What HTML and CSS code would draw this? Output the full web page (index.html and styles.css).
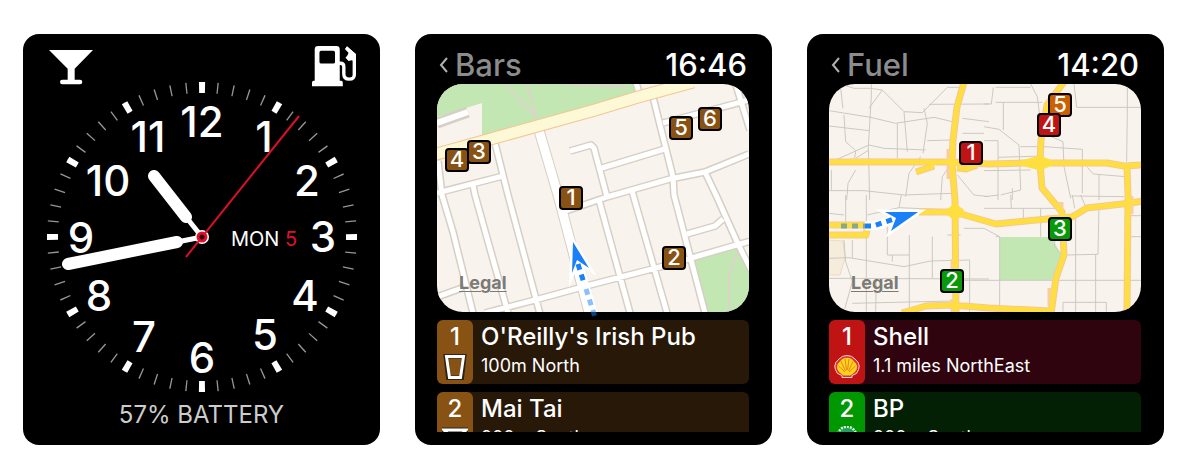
FILE: index.html
```html
<!DOCTYPE html>
<html lang="en">
<head>
<meta charset="utf-8">
<meta name="viewport" content="width=device-width, initial-scale=1">
<title>Watch places</title>
<link rel="stylesheet" href="styles.css">
</head>
<body>
<main class="watches">
  <section class="watch face" aria-label="Watch face">
    <div class="complications">
      <button class="complication" aria-label="Bars">
        <svg class="icon-glass" viewBox="0 0 132 104"><path d="M0 0H132L77 56V89H93a7 7 0 0 1 0 14H40a7 7 0 0 1 0-14H56V56Z"/></svg>
      </button>
      <button class="complication" aria-label="Fuel">
        <svg class="icon-pump" viewBox="0 0 130 120">
          <path fill-rule="evenodd" d="M18 0H72a10 10 0 0 1 10 10V103H86a5 5 0 0 1 5 5V119H0V108a5 5 0 0 1 5-5H8V10A10 10 0 0 1 18 0ZM27 14a5 5 0 0 0-5 5V47a5 5 0 0 0 5 5H63a5 5 0 0 0 5-5V19a5 5 0 0 0-5-5Z"/>
          <path class="hose" d="M80 51h4q10 0 10 10V82q0 16 16 16t15-16V28L101 5"/>
          <path d="M98 9 103 1 130 24V48L118 42 108 44 99 35 105 27 108 20Z"/>
        </svg>
      </button>
    </div>
    <svg class="dial" viewBox="0 0 312 312">
      <circle class="tick minor" cx="156" cy="156" r="149.5" pathLength="60" stroke-dasharray=".085 .915" stroke-dashoffset=".042"/>
      <circle class="tick major" cx="156" cy="156" r="149.5" pathLength="12" stroke-dasharray=".077 .923" stroke-dashoffset=".038"/>
      <g class="hours">
        <text x="156" y="56">12</text><text x="218" y="71">1</text><text x="261" y="115">2</text>
        <text x="277" y="171">3</text><text x="259" y="230">4</text><text x="219" y="269">5</text>
        <text x="156" y="292">6</text><text x="98" y="271">7</text><text x="53" y="230">8</text>
        <text x="35" y="172">9</text><text x="62" y="115">10</text><text x="102" y="71">11</text>
      </g>
      <text class="date" x="185" y="165">MON <tspan class="day">5</tspan></text>
      <g class="hand">
        <path class="stem" d="M156 156 140 136M156 156 131 161"/>
        <path class="bar" d="M108 95 140 136M22 183 131 161"/>
        <circle class="hub" cx="156" cy="156" r="7"/>
      </g>
      <path class="second" d="M140 176 253 35"/>
      <circle class="pin-hub" cx="156" cy="156" r="4"/>
    </svg>
    <p class="battery">57% BATTERY</p>
  </section>

  <section class="watch places" aria-label="Bars">
    <header class="bar-top">
      <button class="back"><svg class="chevron" viewBox="0 0 12 16"><path d="M10 1 4 8 10 15"/></svg>Bars</button>
      <time class="time">16:46</time>
    </header>
    <div class="map">
      <svg class="map-art" viewBox="0 0 312 228">
        <defs>
          <clipPath id="map-shape"><rect width="312" height="228" rx="26"/></clipPath>
          <g id="streets">
            <path d="M58 59 71 111 103 230M1 77 5 111 16 148 36 229M0 109 66 92M36 101 38 111 71 229M133 67 154 61 157 64 170 113M126 128 170 113 233 95 268 88 312 70M165 84 231 64M199-2 202 9M216 13 236 93 237 111 268 229M226 39 312 16M298-2 313 46M268 88 279 111 301 160 314 186M195 107 230 229M162 116 193 229M0 213 25 204M48 229 98 216 153 201 223 183 303 160 314 157M250 150 278 142 286 135"/>
          </g>
        </defs>
        <g clip-path="url(#map-shape)">
          <rect class="land" width="312" height="228"/>
          <path class="park" d="M0 0V33L45 19V53L203 10 196 0Z"/>
          <path class="park" d="M256 176 301 164 314 186V228H271Z"/>
          <path class="trail" d="M68 0 99 33M90 0 100 38M301 166 292 191V228M130 0 190 3"/>
          <use href="#streets" class="street-edge"/>
          <path class="street-edge wide" d="M101 43 121 111 153 232M0 39 31 28"/>
          <use href="#streets" class="street"/>
          <path class="street wide" d="M101 43 121 111 153 232"/>
          <path class="street lane" d="M0 39 31 28"/>
          <path class="avenue-edge" d="M-4 71 158 26 201 13 256-2"/>
          <path class="avenue" d="M-4 71 158 26 201 13 256-2"/>
          <path class="route-edge" d="M141 180 158 235"/>
        </g>
        <path class="arrow-edge" d="M136 158 135 189 140 176 152 184Z"/>
        <path class="arrow" d="M136 158 135 189 140 176 152 184Z"/>
        <path class="route near" d="M141 180 147 199"/>
        <path class="route far" d="M149 205 158 233"/>
        <g class="pins brown">
          <rect x="9" y="65" width="22" height="22" rx="3"/><text x="20" y="83">4</text>
          <rect x="31" y="57" width="22" height="22" rx="3"/><text x="42" y="75">3</text>
          <rect x="123" y="103" width="22" height="22" rx="3"/><text x="134" y="121">1</text>
          <rect x="233" y="33" width="22" height="22" rx="3"/><text x="244" y="51">5</text>
          <rect x="262" y="24" width="22" height="22" rx="3"/><text x="273" y="42">6</text>
          <rect x="226" y="163" width="22" height="22" rx="3"/><text x="237" y="181">2</text>
        </g>
      </svg>
      <a class="legal" href="#legal">Legal</a>
    </div>
    <ul class="list">
      <li><button class="row row-brown">
        <span class="badge">1<svg class="badge-icon" viewBox="0 0 26 26"><path class="tumbler-edge" d="M4 2H22L19.500 24H6.500Z"/><path class="tumbler" d="M4.500 2.500H21.500L18.500 23.500H7.500Z"/></svg></span>
        <span class="info"><span class="name">O'Reilly's Irish Pub</span><span class="where">100m North</span></span>
      </button></li>
      <li><button class="row row-brown">
        <span class="badge">2<svg class="badge-icon" viewBox="0 0 26 26"><path class="tumbler-edge" d="M2 4H24L13 15Z"/><path class="tumbler" d="M2 4H24L13 15Z"/></svg></span>
        <span class="info"><span class="name">Mai Tai</span><span class="where">200m South</span></span>
      </button></li>
    </ul>
  </section>

  <section class="watch places" aria-label="Fuel">
    <header class="bar-top">
      <button class="back"><svg class="chevron" viewBox="0 0 12 16"><path d="M10 1 4 8 10 15"/></svg>Fuel</button>
      <time class="time">14:20</time>
    </header>
    <div class="map">
      <svg class="map-art" viewBox="0 0 312 228">
        <defs>
          <g id="highways">
            <path d="M-2 78H123L160 80 195 79H278L295 82 314 81M135-2 128 23 124 56 123 79 126 116 127 230M235-2 218 21 212 56 211 79 213 104 233 128 235 171 227 194 222 230M298 83 299 111 298 230M90 128H125L160 138 167 140 218 135 243 133 258 124 302 119 314 117M-2 141H38M-2 151H37L38 146M73 229 97 222 123 221 160 224 222 227"/>
          </g>
        </defs>
        <g clip-path="url(#map-shape)">
          <rect class="land" width="312" height="228"/>
          <path class="block" d="M0 156 14 157 16 174 11 191H0Z"/>
          <path class="park" d="M171 153H222L232 170 223 196H171Z"/>
          <g class="lanes">
            <path transform="translate(-5 -4) scale(.3333)" d="M50 25 57 85M142 12V50L133 200 137 360M175 30 135 85M50 12 90 25H138L175 30 240 95 295 98 370 22H405M15 92 140 112 215 130 330 112 385 125M60 105 65 185 95 212 92 235M15 138 135 152M35 240 135 195 180 205 305 210M220 130V235M240 95 250 215M300 85 310 130 297 220M310 182 385 180M315 73 495 72M95 235 135 210M95 270 72 310 68 360M15 332H120L240 345 385 340M22 270V330M375 260 355 290 350 360M290 230 255 280 245 350M415 115 495 125M415 160H480M400 285 450 345 495 350"/>
            <path transform="translate(155 -4) scale(.3333)" d="M35 22H140M28 22 22 72H0M35 67H175M58 67V150M0 140 45 148 105 195 110 330 50 345M0 182H42V360M140 12 160 50 175 170M270 12 278 82H471M430 12V100L428 245M110 200H165M190 165 237 185 240 260 260 355M180 200 295 208V340M180 228 42 232M0 272 140 270M310 262 328 282 425 290M345 282V360M262 348 420 350M85 325V360"/>
            <path transform="translate(-5 111) scale(.3333)" d="M65 0V90M127 0V350M232 0 225 38 130 60M15 55 60 60M225 38 385 45M190 75V180H256M256 120V350M325 125V250M15 190 75 188 240 215 320 198 437 195V350M15 250 495 252M85 135V190M60 135 65 200 85 260 60 350M157 252 155 350M85 325 385 318M205 180V200M370 120H410"/>
            <path transform="translate(155 111) scale(.3333)" d="M0 40H225M118 40V80M170 40V125M35 125H47M-60 256H471M47 256V335M275 70V350M345 30 342 178 250 180M335 178V350M237 350V322H367V350M265 0 272 40M290 0 305 35M440 62H471M440 125H471M80 0 82 40M0 5 45 0M-60 100 0 100 47 125V256M212 125V155L232 178"/>
          </g>
          <g class="highway-edge">
            <use href="#highways"/>
            <path d="M87 88 105 82M128 84 137 85 148 81"/>
          </g>
          <g class="ramps">
            <path d="M20 77H58M120 65V95M118 127H134M124 215V228M232 118V130M302 112V130M124 175V190M221 204V222"/>
          </g>
          <g class="highway">
            <use href="#highways"/>
            <path d="M87 88 105 82M128 84 137 85 148 81M119 128 126 122 133 128 126 134ZM193 79 211 74 223 79 211 84ZM120 79H128"/>
          </g>
          <path class="route-edge" d="M36 142 50 141 68 134"/>
        </g>
        <path class="arrow-edge" d="M89 128 56 128 67 134 62 147Z"/>
        <path class="arrow" d="M89 128 56 128 67 134 62 147Z"/>
        <path class="route faded" d="M12 142H36"/>
        <path class="route near" d="M36 142H44L68 134"/>
        <g class="pins red">
          <rect class="orange" x="220" y="10" width="22" height="22" rx="3"/><text x="231" y="28">5</text>
          <rect x="209" y="30" width="22" height="22" rx="3"/><text x="220" y="48">4</text>
          <rect x="131" y="58" width="22" height="22" rx="3"/><text x="142" y="76">1</text>
          <rect class="green" x="112" y="186" width="22" height="22" rx="3"/><text x="123" y="204">2</text>
          <rect class="green" x="220" y="134" width="22" height="22" rx="3"/><text x="231" y="152">3</text>
        </g>
      </svg>
      <a class="legal" href="#legal">Legal</a>
    </div>
    <ul class="list">
      <li><button class="row row-red">
        <span class="badge">1<svg class="badge-icon" viewBox="0 0 26 26"><path class="shell-edge" d="M8 23.500V21.500L3.500 19.500Q.5 15 .8 12 1 8 5 5 8 1.500 13 1.500T21 5Q25 8 25.200 12 25.500 15 22.500 19.500L18 21.500V23.500Z"/><path class="shell-body" d="M9.500 21.500 5 18Q2.500 15 3 12 3.500 9 6 7.500 8 4 13 3.800 18 4 20 7.500 22.500 9 23 12 23.500 15 21 18L16.500 21.500Z"/><path class="shell-rays" d="M11 18 4.500 12M11.500 17 7 7.500M12.500 16 11 5M13.500 16 15 5M14.500 17 19 7.500M15 18 21.500 12"/></svg></span>
        <span class="info"><span class="name">Shell</span><span class="where">1.1 miles NorthEast</span></span>
      </button></li>
      <li><button class="row row-green">
        <span class="badge">2<svg class="badge-icon" viewBox="0 0 26 26"><circle class="flower-edge" cx="13" cy="10" r="9"/><circle class="flower" cx="13" cy="10" r="8"/></svg></span>
        <span class="info"><span class="name">BP</span><span class="where">200m South</span></span>
      </button></li>
    </ul>
  </section>
</main>
</body>
</html>
```
FILE: styles.css
```css
* { box-sizing: border-box; }
body {
  margin: 0;
  background: #fff;
  color: #fff;
  font-family: Inter, "Liberation Sans", sans-serif;
}
button {
  margin: 0;
  padding: 0;
  border: 0;
  background: none;
  color: inherit;
  font: inherit;
  text-align: left;
}
.watches {
  display: grid;
  grid-template-columns: repeat(3, 1fr);
  gap: 35px;
  padding: 34px 23px 29px;
}
.watch {
  background: #000;
  border-radius: 16px;
}

/* Clock face */
.face { display: flex; flex-direction: column; }
.complications {
  display: flex;
  justify-content: space-between;
  align-items: flex-start;
  height: 47px;
  padding: 12px 24px 0 26px;
}
.complication { display: block; fill: #fff; }
.complication svg { display: block; }
.icon-glass { width: 44px; margin-top: 4px; }
.icon-pump { width: 44px; }
.hose { fill: none; stroke: #fff; stroke-width: 10; }
.dial { display: block; width: calc(100% - 45px); margin: 0 auto; }
.tick { fill: none; stroke-width: 11; }
.minor { stroke: #969696; }
.major { stroke: #fff; }
.hours { fill: #fff; font-size: 42px; font-weight: 500; text-anchor: middle; }
.date { fill: #fff; font-size: 20px; }
.day { fill: #e0102c; }
.hand { fill: #fff; stroke: #fff; stroke-linecap: round; }
.stem { stroke-width: 5; }
.bar { stroke-width: 12; }
.hub { stroke: none; }
.second { stroke: #d81028; stroke-width: 2; }
.pin-hub { fill: #300008; stroke: #e0102c; stroke-width: 3; }
.battery {
  margin: 0;
  padding-bottom: 8px;
  color: #ccc;
  font-size: 24px;
  line-height: 44px;
  text-align: center;
}

/* Places screens */
.places { padding: 0 23px 13px 22px; }
.bar-top {
  display: flex;
  justify-content: space-between;
  padding: 11px 2px 0 0;
  font-size: 31px;
  font-weight: 500;
  line-height: 39px;
}
.back { display: flex; align-items: center; gap: 6px; color: #8c8c8c; }
.chevron { width: 12px; height: 16px; fill: none; stroke: #b0b0b8; stroke-width: 2; }
.map { position: relative; }
.map-art { display: block; width: 100%; overflow: visible; }
.legal {
  position: absolute;
  left: 22px;
  bottom: 18px;
  color: #7c7a76;
  font-size: 18px;
  font-weight: 700;
  line-height: 22px;
  text-decoration-thickness: 1px;
  text-underline-offset: 2px;
}

/* Map artwork */
.land { fill: #f8f4ed; }
.park { fill: #c2e7b2; }
.block { fill: #f5ecdc; stroke: #eadac4; }
.trail { fill: none; stroke: #dcd4ca; stroke-width: 2; }
.street, .street-edge { fill: none; stroke-linejoin: round; }
.street-edge { stroke: #d6cfc5; stroke-width: 8; }
.street { stroke: #fff; stroke-width: 5; }
.street-edge.wide { stroke-width: 11; }
.street.wide { stroke-width: 9; }
.street.lane { stroke-width: 6; }
.avenue-edge { fill: none; stroke: #f3c793; stroke-width: 13; }
.avenue { fill: none; stroke: #fdf9d6; stroke-width: 11; }
.lanes { fill: none; stroke: #cbc8c3; stroke-width: 3; }
.highway-edge, .highway, .ramps { fill: none; stroke-linejoin: round; }
.highway-edge { stroke: #f5c795; stroke-width: 7; }
.ramps { stroke: #f8cf9c; stroke-width: 5; }
.highway { stroke: #ffdf40; stroke-width: 5; }
.route, .route-edge { fill: none; }
.route-edge { stroke: #fff; stroke-width: 9; }
.route { stroke-width: 5; stroke-dasharray: 6 5; }
.near { stroke: #1a80fa; }
.far { stroke: #1a80fa; opacity: .5; }
.faded { stroke: #6c9c90; opacity: .8; }
.arrow-edge { fill: #fff; stroke: #fff; stroke-width: 5; stroke-miterlimit: 8; }
.arrow { fill: #1a80fa; }
.pins rect { stroke: #000; stroke-width: 2; }
.pins text { fill: #fff; font-size: 22px; font-weight: 500; text-anchor: middle; }
.brown rect { fill: #885214; }
.red rect { fill: #c01414; }
.red .orange { fill: #cc6000; }
.red .green { fill: #089808; }

/* Result rows */
.list {
  display: grid;
  gap: 8px;
  max-height: 112px;
  margin: 8px 0 0;
  padding: 0;
  overflow: hidden;
  list-style: none;
}
.row {
  display: grid;
  grid-template-columns: 36px 1fr;
  gap: 8px;
  width: 100%;
  border-radius: 6px;
}
.badge {
  display: flex;
  flex-direction: column;
  align-items: center;
  border-radius: 6px;
  font-size: 24px;
  font-weight: 500;
  line-height: 34px;
}
.badge-icon { width: 26px; height: 26px; }
.info { display: flex; flex-direction: column; padding-bottom: 6px; white-space: nowrap; }
.name { font-size: 24px; font-weight: 500; line-height: 34px; }
.where { font-size: 18px; line-height: 24px; }
.row-brown { background: #281808; }
.row-brown .badge { background: #885214; }
.row-red { background: #30040e; }
.row-red .badge { background: #c01414; }
.row-green { background: #042004; }
.row-green .badge { background: #009800; }
.tumbler { fill: none; stroke: #fff; stroke-width: 3; }
.tumbler-edge { fill: #885214; stroke: #2c2418; stroke-width: 5; }
.shell-edge { fill: #e03030; stroke: #f6d8d4; stroke-width: 1; }
.shell-body { fill: #ffd21c; }
.shell-rays { fill: none; stroke: #e8841c; stroke-width: 1; }
.flower-edge { fill: none; stroke: #d8ffe4; stroke-width: 3; stroke-dasharray: 2 1; }
.flower { fill: #20a060; }
```
